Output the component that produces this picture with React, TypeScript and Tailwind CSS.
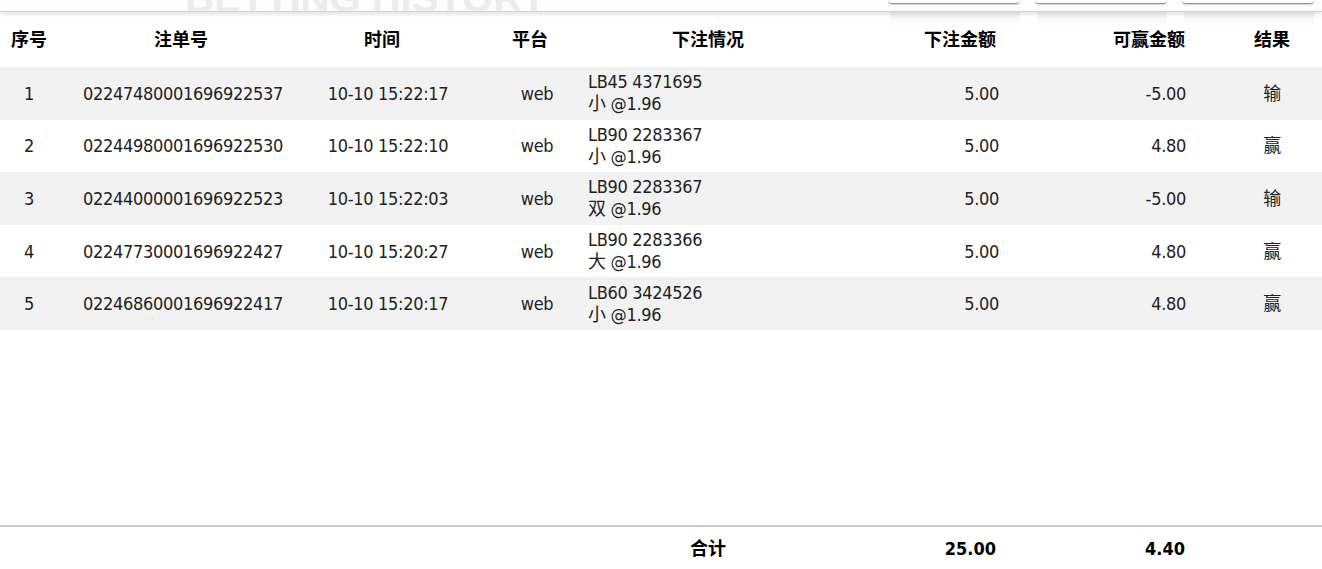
import React from 'react';

interface Bet {
  no: number;
  id: string;
  time: string;
  platform: string;
  game: string;
  pick: string;
  stake: string;
  win: string;
  result: string;
}

const bets: Bet[] = [
  { no: 1, id: '02247480001696922537', time: '10-10 15:22:17', platform: 'web', game: 'LB45 4371695', pick: '小 @1.96', stake: '5.00', win: '-5.00', result: '输' },
  { no: 2, id: '02244980001696922530', time: '10-10 15:22:10', platform: 'web', game: 'LB90 2283367', pick: '小 @1.96', stake: '5.00', win: '4.80', result: '赢' },
  { no: 3, id: '02244000001696922523', time: '10-10 15:22:03', platform: 'web', game: 'LB90 2283367', pick: '双 @1.96', stake: '5.00', win: '-5.00', result: '输' },
  { no: 4, id: '02247730001696922427', time: '10-10 15:20:27', platform: 'web', game: 'LB90 2283366', pick: '大 @1.96', stake: '5.00', win: '4.80', result: '赢' },
  { no: 5, id: '02246860001696922417', time: '10-10 15:20:17', platform: 'web', game: 'LB60 3424526', pick: '小 @1.96', stake: '5.00', win: '4.80', result: '赢' },
];

const font = "font-['DejaVu_Sans_Condensed','DejaVu_Sans','Noto_Sans_CJK_SC',sans-serif]";

const Tab = () => (
  <div className="w-[130px] h-[3px] bg-white rounded-b-[2px] shadow-[0_1px_2px_rgba(0,0,0,0.55)]" />
);

const BettingHistory: React.FC = () => {
  return (
    <div className={`w-[1322px] h-[569px] bg-white flex flex-col text-[18px] text-[#222] ${font}`}>
      {/* cut off page header */}
      <div className="h-[12px] shrink-0 flex items-end overflow-hidden border-b border-[#d4d4d4] shadow-[0_2px_5px_rgba(0,0,0,0.13)] relative z-10 bg-[#fdfdfd]">
        <div className="w-[185px] shrink-0" />
        <div className="font-['Liberation_Sans',sans-serif] font-bold text-[40px] leading-none text-[#ececec] mb-[-7px] whitespace-nowrap">
          BETTING HISTORY
        </div>
        <div className="flex-1" />
        <div className="flex gap-[17px] self-start pr-[9px]">
          <Tab />
          <Tab />
          <Tab />
        </div>
      </div>

      {/* column header */}
      <div className="h-[55px] shrink-0 flex items-center font-bold text-black relative">
        <div className="w-[58px] text-center">序号</div>
        <div className="w-[246px] text-center">注单号</div>
        <div className="w-[156px] text-center">时间</div>
        <div className="w-[120px] text-center pl-[20px]">平台</div>
        <div className="w-[256px] text-center">下注情况</div>
        <div className="w-[169px] text-right pr-[9px]">下注金额</div>
        <div className="w-[217px] text-right pr-[37px]">可赢金额</div>
        <div className="w-[100px] text-center">结果</div>
        <div className="absolute left-[890px] top-0 w-[424px] h-[14px] flex gap-[17px] pointer-events-none">
          <div className="w-[130px] h-full bg-gradient-to-b from-[#e6e6e6] to-white opacity-60" />
          <div className="w-[130px] h-full bg-gradient-to-b from-[#e6e6e6] to-white opacity-60" />
          <div className="w-[130px] h-full bg-gradient-to-b from-[#e6e6e6] to-white opacity-60" />
        </div>
      </div>

      {/* rows */}
      {bets.map((b, i) => (
        <div
          key={b.id}
          className={`h-[52.6px] shrink-0 flex items-center tracking-[-0.3px] ${i % 2 === 0 ? 'bg-[#f2f2f2]' : 'bg-white'}`}
        >
          <div className="w-[58px] text-center">{b.no}</div>
          <div className="w-[246px] text-center pl-[4px]">{b.id}</div>
          <div className="w-[156px] text-center pl-[12px]">{b.time}</div>
          <div className="w-[120px] text-center pl-[34px]">{b.platform}</div>
          <div className="w-[256px] pl-[8px] leading-[22px]">
            <div>{b.game}</div>
            <div>{b.pick}</div>
          </div>
          <div className="w-[169px] text-right pr-[6px]">{b.stake}</div>
          <div className="w-[217px] text-right pr-[36px]">{b.win}</div>
          <div className="w-[100px] text-center">{b.result}</div>
        </div>
      ))}

      <div className="flex-1" />

      {/* totals */}
      <div className="h-[44px] shrink-0 border-t-2 border-[#c9c9d0] flex items-center font-bold text-black">
        <div className="w-[580px]" />
        <div className="w-[256px] text-center">合计</div>
        <div className="w-[169px] text-right pr-[9px]">25.00</div>
        <div className="w-[217px] text-right pr-[37px]">4.40</div>
        <div className="w-[100px]" />
      </div>
    </div>
  );
};

export default function App() {
  return <BettingHistory />;
}
